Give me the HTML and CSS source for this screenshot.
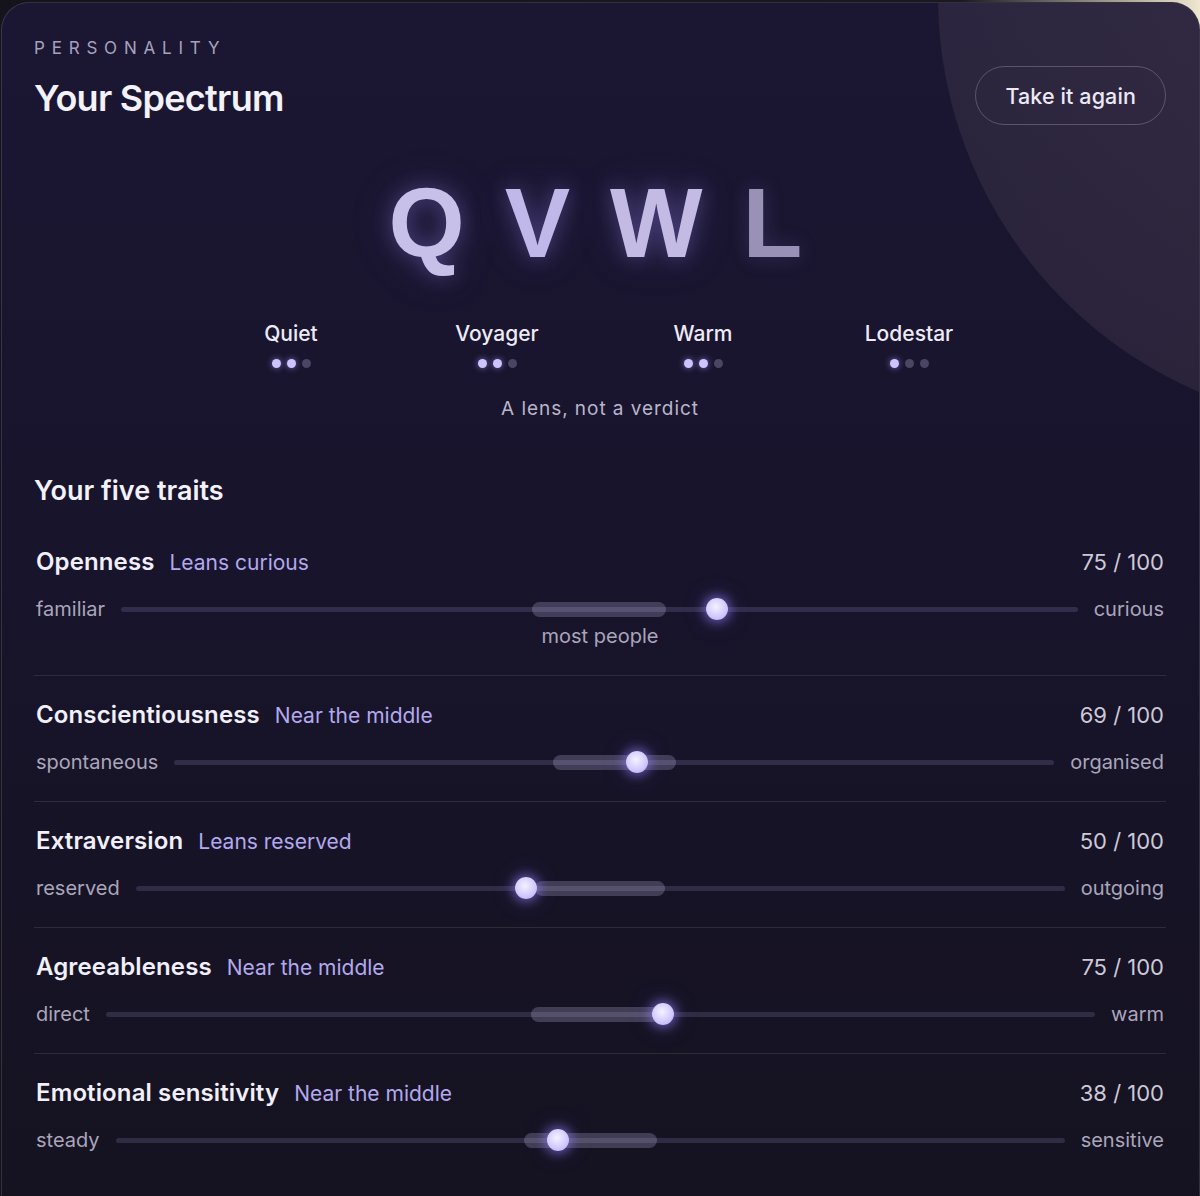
FILE: index.html
```html
<!DOCTYPE html>
<html lang="en">
<head>
<meta charset="utf-8">
<title>Your Spectrum</title>
<link rel="stylesheet" href="styles.css">
</head>
<body>
<main class="card">
  <div class="halo"></div>
  <header class="header">
    <div class="header-text">
      <div class="eyebrow">PERSONALITY</div>
      <h1 class="title">Your Spectrum</h1>
    </div>
    <button class="retake">Take it again</button>
  </header>

  <div class="code">
    <span class="letter l1">Q</span>
    <span class="letter l2">V</span>
    <span class="letter l3">W</span>
    <span class="letter l4">L</span>
  </div>

  <div class="archetypes">
    <div class="arch">
      <div class="arch-name">Quiet</div>
      <div class="dots"><span class="dot on"></span><span class="dot on"></span><span class="dot"></span></div>
    </div>
    <div class="arch">
      <div class="arch-name">Voyager</div>
      <div class="dots"><span class="dot on"></span><span class="dot on"></span><span class="dot"></span></div>
    </div>
    <div class="arch">
      <div class="arch-name">Warm</div>
      <div class="dots"><span class="dot on"></span><span class="dot on"></span><span class="dot"></span></div>
    </div>
    <div class="arch">
      <div class="arch-name">Lodestar</div>
      <div class="dots"><span class="dot on"></span><span class="dot"></span><span class="dot"></span></div>
    </div>
  </div>

  <p class="tagline">A lens, not a verdict</p>

  <h2 class="section-title">Your five traits</h2>

  <ul class="traits">
    <li class="trait">
      <div class="trait-head">
        <span class="trait-name">Openness</span>
        <span class="trait-desc">Leans curious</span>
        <span class="trait-score">75 / 100</span>
      </div>
      <div class="scale">
        <span class="pole">familiar</span>
        <div class="track">
          <span class="band"></span>
          <span class="thumb" style="left: 62.3%"></span>
        </div>
        <span class="pole">curious</span>
      </div>
      <div class="norm-label">most people</div>
    </li>
    <li class="trait">
      <div class="trait-head">
        <span class="trait-name">Conscientiousness</span>
        <span class="trait-desc">Near the middle</span>
        <span class="trait-score">69 / 100</span>
      </div>
      <div class="scale">
        <span class="pole">spontaneous</span>
        <div class="track">
          <span class="band"></span>
          <span class="thumb" style="left: 52.6%"></span>
        </div>
        <span class="pole">organised</span>
      </div>
    </li>
    <li class="trait">
      <div class="trait-head">
        <span class="trait-name">Extraversion</span>
        <span class="trait-desc">Leans reserved</span>
        <span class="trait-score">50 / 100</span>
      </div>
      <div class="scale">
        <span class="pole">reserved</span>
        <div class="track">
          <span class="band"></span>
          <span class="thumb" style="left: 42%"></span>
        </div>
        <span class="pole">outgoing</span>
      </div>
    </li>
    <li class="trait">
      <div class="trait-head">
        <span class="trait-name">Agreeableness</span>
        <span class="trait-desc">Near the middle</span>
        <span class="trait-score">75 / 100</span>
      </div>
      <div class="scale">
        <span class="pole">direct</span>
        <div class="track">
          <span class="band"></span>
          <span class="thumb" style="left: 56.3%"></span>
        </div>
        <span class="pole">warm</span>
      </div>
    </li>
    <li class="trait">
      <div class="trait-head">
        <span class="trait-name">Emotional sensitivity</span>
        <span class="trait-desc">Near the middle</span>
        <span class="trait-score">38 / 100</span>
      </div>
      <div class="scale">
        <span class="pole">steady</span>
        <div class="track">
          <span class="band"></span>
          <span class="thumb" style="left: 46.6%"></span>
        </div>
        <span class="pole">sensitive</span>
      </div>
    </li>
  </ul>
</main>
</body>
</html>
```
FILE: styles.css
```css
* { box-sizing: border-box; }

html, body {
  margin: 0;
  padding: 0;
}

body {
  background: linear-gradient(90deg, #15131b 0%, #1a1822 80%, #efe7cf 100%);
  font-family: Inter, "Noto Sans", "Liberation Sans", sans-serif;
  color: #efedf7;
  height: 1196px;
  overflow: hidden;
  padding: 2px 0 0 1px;
}

.card {
  position: relative;
  overflow: hidden;
  width: 1199px;
  min-height: 1300px;
  border: 1px solid rgba(255, 255, 255, 0.13);
  border-radius: 28px;
  background: linear-gradient(180deg, #1b1733 0%, #18142c 40%, #15121f 100%);
  padding: 33px 33px 0 32px;
}

.halo {
  position: absolute;
  left: 936px;
  top: -438px;
  width: 862px;
  height: 862px;
  border-radius: 50%;
  background: radial-gradient(circle at 50% 50%, rgba(255, 220, 200, 0.10) 0%, rgba(240, 200, 200, 0.085) 60%, rgba(230, 190, 210, 0.06) 100%);
  pointer-events: none;
}

.header {
  position: relative;
  display: flex;
  justify-content: space-between;
  align-items: flex-start;
}

.eyebrow {
  font-size: 17px;
  line-height: 24px;
  letter-spacing: 0.4em;
  color: #a7a2bb;
}

.title {
  margin: 16px 0 0;
  font-size: 36px;
  line-height: 44px;
  font-weight: 600;
  letter-spacing: -0.02em;
  color: #f3f1fa;
}

.retake {
  margin-top: 30px;
  height: 59px;
  padding: 0 29px;
  border: 1.5px solid rgba(255, 255, 255, 0.22);
  border-radius: 30px;
  background: transparent;
  color: #ece8f6;
  font-family: inherit;
  font-size: 21.5px;
  font-weight: 500;
  letter-spacing: 0.005em;
}

.code {
  position: relative;
  margin-top: 49px;
  padding-right: 9px;
  display: flex;
  justify-content: center;
  gap: 40px;
  font-family: "Liberation Sans", Arial, sans-serif;
  font-size: 98px;
  line-height: 98px;
  font-weight: 700;
  text-shadow: 0 0 20px rgba(150, 130, 235, 0.4), 0 0 46px rgba(120, 100, 220, 0.2);
}

.l1 { color: #c7c0e8; }
.l2 { color: #c1b8ea; }
.l3 { color: #c3bbe4; }
.l4 { color: #9992b6; text-shadow: 0 0 20px rgba(150, 130, 235, 0.22); }

.archetypes {
  margin-top: 48px;
  display: grid;
  grid-template-columns: repeat(4, 206px);
  justify-content: center;
}

.arch {
  display: flex;
  flex-direction: column;
  align-items: center;
}

.arch-name {
  font-size: 21px;
  line-height: 28px;
  font-weight: 500;
  color: #eeebf7;
}

.dots {
  margin-top: 11px;
  display: flex;
  gap: 6px;
}

.dot {
  width: 9px;
  height: 9px;
  border-radius: 50%;
  background: #4a4562;
}

.dot.on {
  background: #cdc4ff;
  box-shadow: 0 0 6px rgba(170, 150, 255, 0.7);
}

.tagline {
  margin: 28px 0 0;
  text-align: center;
  font-size: 19px;
  line-height: 26px;
  letter-spacing: 0.05em;
  color: #bab6ca;
}

.section-title {
  margin: 52px 0 0;
  font-size: 27px;
  line-height: 34px;
  font-weight: 600;
  color: #f3f1fa;
}

.traits {
  list-style: none;
  margin: 15px 0 0;
  padding: 0;
}

.trait {
  padding: 23px 0 27px;
  border-bottom: 1px solid rgba(255, 255, 255, 0.1);
}

.trait:last-child {
  border-bottom: none;
}

.trait-head {
  display: flex;
  align-items: baseline;
  height: 32px;
  padding: 0 2px;
  line-height: 32px;
}

.trait-name {
  font-size: 24px;
  font-weight: 600;
  letter-spacing: 0.005em;
  color: #f1eff9;
}

.trait-desc {
  margin-left: 15px;
  font-size: 21px;
  color: #b3a9ee;
}

.trait-score {
  margin-left: auto;
  font-size: 22px;
  color: #cdc9d8;
}

.scale {
  margin-top: 19px;
  height: 24px;
  padding: 0 2px;
  display: flex;
  align-items: center;
  gap: 16px;
}

.pole {
  font-size: 20px;
  color: #aaa6bb;
}

.track {
  position: relative;
  flex: 1;
  height: 5px;
  border-radius: 3px;
  background: rgba(200, 190, 255, 0.15);
}

.band {
  position: absolute;
  left: 43%;
  width: 14%;
  top: -5px;
  height: 15px;
  border-radius: 8px;
  background: rgba(220, 212, 255, 0.22);
}

.thumb {
  position: absolute;
  top: 50%;
  width: 22px;
  height: 22px;
  margin: -11px 0 0 -11px;
  border-radius: 50%;
  background: radial-gradient(circle at 45% 40%, #f4f1ff 0%, #d6ceff 50%, #b3a7f5 100%);
  box-shadow: 0 0 10px 3px rgba(150, 130, 255, 0.5), 0 0 26px rgba(140, 120, 255, 0.3);
}

.norm-label {
  margin-top: 3px;
  text-align: center;
  font-size: 20px;
  line-height: 24px;
  color: #aaa6bb;
}
```
